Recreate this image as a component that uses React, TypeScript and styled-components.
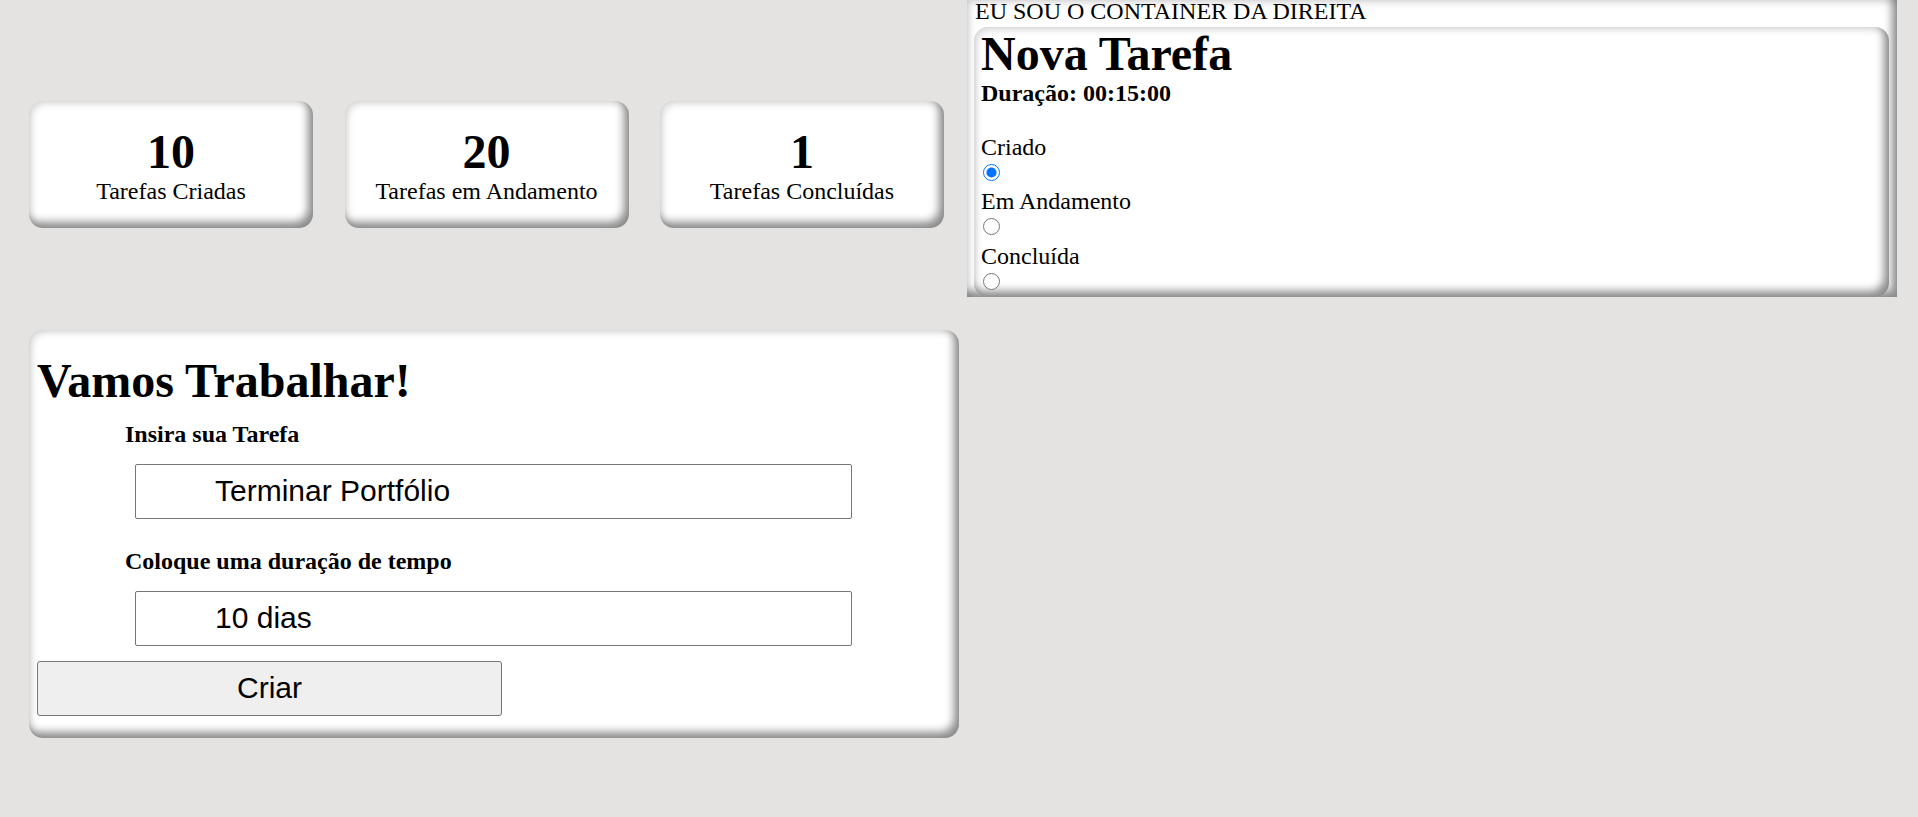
import React from "react";
import styled, { createGlobalStyle } from "styled-components";

const GlobalStyle = createGlobalStyle`
  html, body {
    margin: 0;
    padding: 0;
    background: #e4e3e1;
  }
  body {
    font-family: "Liberation Serif", "Times New Roman", serif;
    font-size: 24px;
    color: #000;
  }
`;

const panelShadow = `
  box-shadow: inset -5px -6px 9px rgba(0, 0, 0, 0.45),
    inset 3px 3px 7px rgba(0, 0, 0, 0.14);
`;

const Page = styled.div`
  display: grid;
  grid-template-columns: 930px 930px;
  column-gap: 8px;
  padding-left: 29px;
  align-items: start;
  min-height: 817px;
  box-sizing: border-box;
`;

const LeftColumn = styled.div`
  display: flex;
  flex-direction: column;
  padding-top: 101px;
  gap: 102px;
`;

const StatsRow = styled.div`
  display: flex;
  gap: 31.5px;
`;

const StatCard = styled.div`
  width: 284px;
  height: 127px;
  box-sizing: border-box;
  padding-top: 2px;
  display: flex;
  flex-direction: column;
  align-items: center;
  justify-content: center;
  background: #fff;
  border-radius: 14px;
  ${panelShadow}
`;

const StatNumber = styled.div`
  font-size: 48px;
  font-weight: bold;
  line-height: 53px;
`;

const StatLabel = styled.div`
  font-size: 24px;
  line-height: 27.6px;
`;

const WorkCard = styled.section`
  width: 930px;
  height: 408px;
  box-sizing: border-box;
  padding: 0 8px;
  background: #fff;
  border-radius: 14px;
  display: flex;
  flex-direction: column;
  align-items: flex-start;
  ${panelShadow}
`;

const Title = styled.h1`
  font-size: 48px;
  font-weight: bold;
  line-height: 55.2px;
  margin: 23px 0 12.5px;
`;

const Field = styled.div<{ $first?: boolean }>`
  display: flex;
  flex-direction: column;
  align-items: flex-start;
  margin-top: ${(p) => (p.$first ? "0" : "29px")};
`;

const FieldLabel = styled.label`
  display: block;
  font-weight: bold;
  font-size: 24px;
  line-height: 27.6px;
  margin: 0 0 15.5px 88px;
`;

const TextInput = styled.input`
  width: 717px;
  height: 55px;
  box-sizing: border-box;
  margin-left: 98px;
  padding: 0 0 0 79px;
  border: 1px solid #767676;
  border-radius: 2px;
  background: #fff;
  font-family: "Liberation Sans", Arial, sans-serif;
  font-size: 30px;
  color: #000;
  outline: none;
`;

const CreateButton = styled.button`
  width: 465px;
  height: 55px;
  margin-top: 15px;
  box-sizing: border-box;
  background: #efefef;
  border: 1px solid #767676;
  border-radius: 3px;
  font-family: "Liberation Sans", Arial, sans-serif;
  font-size: 30px;
  color: #000;
  padding: 0;
`;

const RightContainer = styled.aside`
  width: 930px;
  height: 297px;
  box-sizing: border-box;
  padding: 0 8px 2px 7px;
  background: #fff;
  display: flex;
  flex-direction: column;
  ${panelShadow}
`;

const ContainerCaption = styled.div`
  font-size: 24px;
  line-height: 22px;
  padding: 0 0 5px 1px;
`;

const TaskCard = styled.div`
  flex: 1;
  background: #fff;
  border-radius: 14px;
  padding: 0 7px;
  ${panelShadow}
`;

const TaskTitle = styled.h1`
  font-size: 48px;
  font-weight: bold;
  line-height: 53px;
  margin: 0;
`;

const Duration = styled.p`
  font-weight: bold;
  font-size: 24px;
  line-height: 27.6px;
  margin: 0 0 26.5px;
`;

const StatusOption = styled.div`
  display: flex;
  flex-direction: column;
  align-items: flex-start;
`;

const StatusLabel = styled.label`
  font-size: 24px;
  line-height: 27.6px;
`;

const Radio = styled.input`
  width: 17px;
  height: 17px;
  margin: 2.5px 0 7.2px 2px;
`;

const stats = [
  { value: 10, label: "Tarefas Criadas" },
  { value: 20, label: "Tarefas em Andamento" },
  { value: 1, label: "Tarefas Concluídas" },
];

const statuses = ["Criado", "Em Andamento", "Concluída"];

export default function App() {
  return (
    <>
      <GlobalStyle />
      <Page>
        <LeftColumn>
          <StatsRow>
            {stats.map((s) => (
              <StatCard key={s.label}>
                <StatNumber>{s.value}</StatNumber>
                <StatLabel>{s.label}</StatLabel>
              </StatCard>
            ))}
          </StatsRow>
          <WorkCard>
            <Title>Vamos Trabalhar!</Title>
            <Field $first>
              <FieldLabel htmlFor="tarefa">Insira sua Tarefa</FieldLabel>
              <TextInput id="tarefa" defaultValue="Terminar Portfólio" />
            </Field>
            <Field>
              <FieldLabel htmlFor="duracao">Coloque uma duração de tempo</FieldLabel>
              <TextInput id="duracao" defaultValue="10 dias" />
            </Field>
            <CreateButton type="button">Criar</CreateButton>
          </WorkCard>
        </LeftColumn>
        <RightContainer>
          <ContainerCaption>EU SOU O CONTAINER DA DIREITA</ContainerCaption>
          <TaskCard>
            <TaskTitle>Nova Tarefa</TaskTitle>
            <Duration>Duração: 00:15:00</Duration>
            {statuses.map((st, i) => (
              <StatusOption key={st}>
                <StatusLabel htmlFor={`status-${i}`}>{st}</StatusLabel>
                <Radio
                  id={`status-${i}`}
                  type="radio"
                  name="status"
                  defaultChecked={i === 0}
                />
              </StatusOption>
            ))}
          </TaskCard>
        </RightContainer>
      </Page>
    </>
  );
}
